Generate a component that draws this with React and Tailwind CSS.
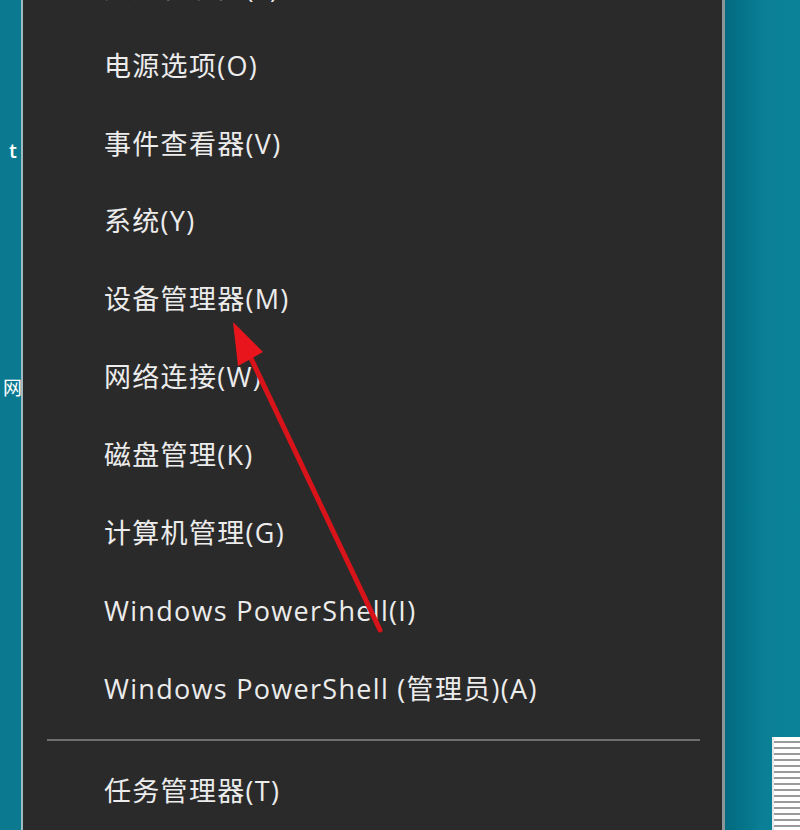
import React from "react";

const items = [
  "应用和功能(F)",
  "电源选项(O)",
  "事件查看器(V)",
  "系统(Y)",
  "设备管理器(M)",
  "网络连接(W)",
  "磁盘管理(K)",
  "计算机管理(G)",
  "Windows PowerShell(I)",
  "Windows PowerShell (管理员)(A)",
];

const MenuItem = ({ label }) => (
  <div className="h-[78px] flex items-center pl-[81px] text-[27px] tracking-[1.3px] text-[#ececec] whitespace-nowrap">
    {label}
  </div>
);

const App = () => {
  return (
    <div
      className="relative w-[800px] h-[830px] flex overflow-hidden bg-[#2a2a2a]"
      style={{ fontFamily: '"Open Sans", "Noto Sans CJK SC", sans-serif' }}
    >
      {/* desktop strip on the left */}
      <div className="relative w-[23px] shrink-0 bg-[#0b7a90] border-r-2 border-[#9fb9c1]">
        <span className="absolute left-[9px] top-[136px] text-[20px] font-semibold text-white">t</span>
        <span className="absolute left-[3px] top-[374px] text-[19px] text-white">网</span>
      </div>

      {/* Win+X menu */}
      <div className="w-[702px] shrink-0 bg-[#2a2a2a] flex flex-col -mt-[51px] border-r-[3px] border-[#8a9599]">
        {items.map((label) => (
          <MenuItem key={label} label={label} />
        ))}
        <div className="ml-[24px] mr-[22px] my-[11px] h-[2px] bg-[#6e6e6e]" />
        <MenuItem label="任务管理器(T)" />
      </div>

      {/* desktop on the right */}
      <div className="flex-1 flex flex-col justify-end bg-gradient-to-r from-[#016a80] via-[#0a7f95] to-[#0b8398]">
        <div className="ml-[47px] h-[93px] border-l-2 border-[#e6e6e6] bg-[repeating-linear-gradient(to_bottom,#ffffff_0px,#ffffff_4px,#9a9a9a_4px,#9a9a9a_6px)]" />
      </div>

      {/* red arrow annotation */}
      <svg
        className="absolute inset-0 pointer-events-none"
        width="800"
        height="830"
        viewBox="0 0 800 830"
      >
        <line x1="380" y1="630" x2="248" y2="352" stroke="#d8141a" strokeWidth="5" strokeLinecap="round" />
        <polygon points="233,322 263,352 238,366" fill="#e8161c" />
      </svg>
    </div>
  );
};

export default App;
